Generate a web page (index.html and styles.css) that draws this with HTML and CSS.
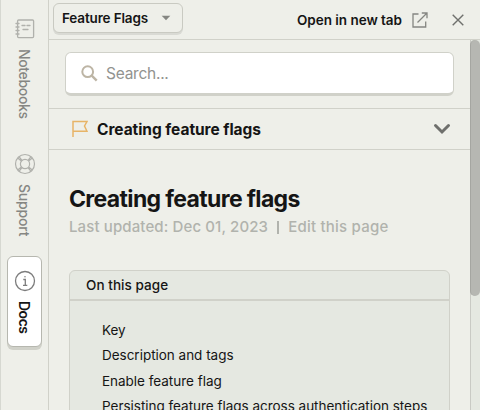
FILE: index.html
```html
<!DOCTYPE html>
<html lang="en">
<head>
<meta charset="utf-8">
<title>Docs</title>
<link rel="stylesheet" href="styles.css">
</head>
<body>
<div class="app">
  <nav class="rail">
    <div class="tab notebooks">
      <svg width="20" height="20" viewBox="0 0 20 20" fill="none" stroke="currentColor" stroke-width="1.3" stroke-linecap="round"><rect x="2.6" y="1" width="16" height="17.6" rx="1"/><path d="M1 4.5h3M1 8h3M1 11.500h3M1 15h3M7 6.500h3M12 6.500h3M8 10.500h5"/></svg>
      <span>Notebooks</span>
    </div>
    <div class="tab support">
      <svg width="22" height="22" viewBox="0 0 22 22" fill="none" stroke="currentColor" stroke-width="1.2"><circle cx="11" cy="11" r="9.5"/><circle cx="11" cy="11" r="4.600"/><path d="M3.700 5l3.700 3M5 3.700l3 3.700M17 3.700l-3 3.700M18.300 5l-3.700 3M3.700 17l3.700-3M5 18.300l3-3.700M17 18.300l-3-3.700M18.300 17l-3.700-3"/></svg>
      <span>Support</span>
    </div>
    <div class="tab docs">
      <svg width="22" height="22" viewBox="0 0 22 22" fill="none" stroke="#7c7c7c" stroke-width="1.3"><circle cx="11" cy="11" r="9.500"/><path d="M9.300 9.500h2v5.500M9 15.300h4.300"/><circle cx="11" cy="6.700" r=".7" fill="#707070" stroke="none"/></svg>
      <span>Docs</span>
    </div>
  </nav>
  <div class="panel">
    <header class="bar">
      <button class="select"><span>Feature Flags</span><svg width="10" height="6" viewBox="0 0 10 6"><path d="M.7.700h8.600L5 5.300z" fill="#858682"/></svg></button>
      <span class="open">Open in new tab</span>
      <svg class="external" width="16" height="16" viewBox="0 0 16 16" fill="none" stroke="#858682" stroke-width="1.300"><path d="M6.500 2H1v13h12.700V9.500M5.500 10.500 15 1M9.800 1H15v5.300"/></svg>
      <svg class="close" width="12" height="12" viewBox="0 0 12 12" fill="none" stroke="#6f706d" stroke-width="1.400"><path d="M.7.700l10.600 10.600M11.300.700.7 11.300"/></svg>
    </header>
    <div class="body">
      <main class="content">
        <div class="search-row">
          <div class="search"><svg width="17" height="17" viewBox="0 0 17 17" fill="none" stroke="#bdb5a5" stroke-width="2"><circle cx="6.700" cy="6.700" r="5.400"/><path d="M10.700 10.700l5 5" stroke-width="2.400"/></svg><span>Search...</span></div>
        </div>
        <div class="crumb">
          <svg width="16" height="18" viewBox="0 0 16 18" fill="none" stroke="#e7b467" stroke-width="1.500"><path d="M1 17V1.500h14L12.500 6l2.500 5.300H1"/></svg>
          <span>Creating feature flags</span>
          <svg class="chevron" width="18" height="12" viewBox="0 0 18 12" fill="none" stroke="#6e6f6c" stroke-width="3" stroke-linecap="round"><path d="M2.500 2.500 9 9l6.500-6.500"/></svg>
        </div>
        <article class="article">
          <h1>Creating feature flags</h1>
          <p class="meta"><span class="updated">Last updated: Dec 01, 2023</span><span class="sep"></span><span class="edit">Edit this page</span></p>
          <section class="toc">
            <h2><span>On this page</span></h2>
            <ul>
              <li class="key">Key</li>
              <li class="desc">Description and tags</li>
              <li class="enable">Enable feature flag</li>
              <li class="persist">Persisting feature flags across authentication steps</li>
            </ul>
          </section>
        </article>
      </main>
      <div class="track"><div class="thumb"></div></div>
    </div>
  </div>
</div>
</body>
</html>
```
FILE: styles.css
```css
* { box-sizing: border-box; margin: 0; padding: 0; }
body { font-family: Inter, sans-serif; background: #eeefe9; color: #151515; overflow: hidden; }
.app { display: flex; width: 480px; height: 410px; white-space: nowrap; overflow: hidden; }
.rail { width: 49px; flex: none; border-left: 1px solid #d6d8d1; border-right: 1px solid #d0d1c9; padding: 12px 7px 0 6px; display: flex; flex-direction: column; }
.tab { width: 35px; border: 1px solid transparent; border-radius: 6px; display: flex; flex-direction: column; align-items: center; color: #b0b1ac; }
.tab span { writing-mode: vertical-rl; font-size: 14px; line-height: 18px; font-weight: 500; color: #858682; margin-right: 1px; }
.tab svg { flex: none; }
.notebooks { height: 134px; padding-top: 6px; }
.notebooks span { margin-top: 10px; letter-spacing: -.35px; }
.support { height: 110px; padding-top: 6px; }
.support span { margin-top: 9px; letter-spacing: -.2px; }
.docs { height: 91px; padding-top: 13px; background: #fff; border-color: #b6b7af; box-shadow: 0 3px 0 #d0d1c9; }
.docs span { margin-top: 9px; color: #151515; font-weight: 600; letter-spacing: -.5px; }
.panel { flex: 1; min-width: 0; display: flex; flex-direction: column; }
.bar { height: 40px; flex: none; border-bottom: 1px solid #d0d1c9; display: flex; align-items: center; padding-left: 4px; }
.select { display: flex; align-items: center; width: 130px; height: 30px; margin-top: -3px; padding: 0 11px 0 8px; border: 1px solid #c9cac2; border-radius: 6px; background: #eeefe9; box-shadow: 0 2px 0 #d9dad4; justify-content: space-between; font: 600 13.5px/20px Inter, sans-serif; color: #151515; letter-spacing: -.15px; }
.open { margin-left: 114px; font-size: 13.5px; font-weight: 600; letter-spacing: -.03px; width: 105px; }
.external { margin-left: 10px; }
.close { margin-left: 24px; }
.body { flex: 1; min-height: 0; display: flex; }
.content { flex: 1; min-width: 0; overflow: hidden; }
.search-row { height: 69px; padding: 12px 16px 0; border-bottom: 1px solid #d0d1c9; }
.search { height: 44px; background: #fff; border: 1px solid #d0d1c9; border-bottom-width: 3px; border-radius: 6px; display: flex; align-items: center; padding-left: 15px; color: #92938f; font-size: 15.5px; letter-spacing: -.25px; }
.search span { margin-left: 8px; }
.crumb { height: 41px; border-bottom: 1px solid #d0d1c9; display: flex; align-items: center; padding: 0 19px 0 23px; font-size: 15.5px; font-weight: 700; }
.crumb span { margin-left: 9px; letter-spacing: -.05px; }
.chevron { margin-left: auto; }
.article { padding: 34px 20px 0; }
h1 { font-size: 23px; line-height: 30px; font-weight: 700; letter-spacing: -.64px; }
.meta { display: flex; align-items: center; font-size: 15px; line-height: 22px; font-weight: 500; color: #b1b3ad; margin-top: 2px; }
.updated { letter-spacing: .12px; }
.edit { letter-spacing: .22px; }
.sep { width: 2px; height: 13px; background: #b1b3ad; margin: 0 9px; }
.toc { margin-top: 32px; height: 180px; border: 1px solid #d0d1c9; border-radius: 6px; background: #e5e8e1; }
.toc h2 { height: 30px; border-bottom: 2px solid #d0d1c9; padding-left: 16px; font-size: 13.5px; line-height: 29px; font-weight: 500; }
.toc h2 span { letter-spacing: .05px; }
.toc ul { list-style: none; padding: 16.5px 0 0 32px; }
.toc li { font-size: 13.5px; line-height: 25.5px; font-weight: 400; letter-spacing: -.02px; }
.track { width: 10px; flex: none; background: #e5e8e1; border-left: 1px solid #c9cac4; }
.thumb { height: 256px; margin-left: -1px; background: #b6b7b2; border-radius: 5px; border-left: 1px solid #a5a6a1; }
```
